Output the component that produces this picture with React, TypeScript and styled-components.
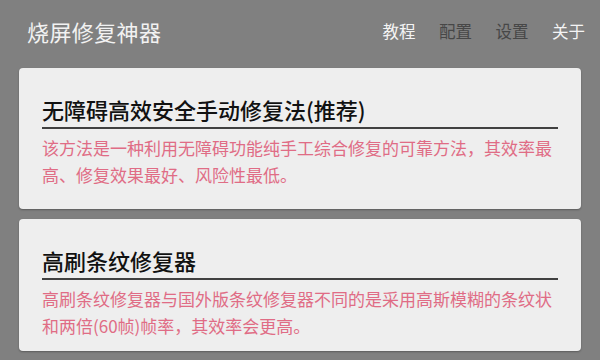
import React from 'react';
import styled, { createGlobalStyle } from 'styled-components';

const GlobalStyle = createGlobalStyle`
  html, body {
    margin: 0;
    padding: 0;
    background: #808080;
  }
  body {
    font-family: "Noto Sans CJK SC", "Noto Sans", sans-serif;
  }
`;

const navItems = [
  { label: '教程', active: true },
  { label: '配置', active: false },
  { label: '设置', active: false },
  { label: '关于', active: true },
];

const methods = [
  {
    title: '无障碍高效安全手动修复法(推荐)',
    desc: '该方法是一种利用无障碍功能纯手工综合修复的可靠方法，其效率最高、修复效果最好、风险性最低。',
    pb: 21,
  },
  {
    title: '高刷条纹修复器',
    desc: '高刷条纹修复器与国外版条纹修复器不同的是采用高斯模糊的条纹状和两倍(60帧)帧率，其效率会更高。',
    pb: 12,
  },
];

const App = () => {
  return (
    <Page>
      <GlobalStyle />
      <TopBar>
        <AppTitle>烧屏修复神器</AppTitle>
        <Nav>
          {navItems.map((item) => (
            <NavItem key={item.label} $active={item.active}>
              {item.label}
            </NavItem>
          ))}
        </Nav>
      </TopBar>

      <CardList>
        {methods.map((m) => (
          <Card key={m.title} $pb={m.pb}>
            <CardTitle>{m.title}</CardTitle>
            <CardDesc>{m.desc}</CardDesc>
          </Card>
        ))}
      </CardList>
    </Page>
  );
};

const Page = styled.div`
  width: 600px;
  height: 360px;
  overflow: hidden;
  background: #808080;
`;

const TopBar = styled.div`
  display: flex;
  justify-content: space-between;
  align-items: center;
  height: 62px;
  padding: 0 15px 0 27px;
  box-sizing: border-box;
`;

const AppTitle = styled.h1`
  margin: 0;
  color: #f2f2f2;
  font-size: 22px;
  font-weight: 400;
  letter-spacing: 0.4px;
`;

const Nav = styled.div`
  display: flex;
  gap: 23.5px;
`;

const NavItem = styled.span<{ $active: boolean }>`
  color: ${(p) => (p.$active ? '#f4f4f4' : '#474747')};
  font-size: 16.5px;
  line-height: 22px;
`;

const CardList = styled.div`
  display: flex;
  flex-direction: column;
  gap: 10px;
  padding: 6px 19px 0;
`;

const Card = styled.div<{ $pb: number }>`
  background: #eeeeee;
  border-radius: 4px;
  box-shadow: 0 1px 2px rgba(0, 0, 0, 0.3);
  padding: 26px 23px ${(p) => p.$pb}px;
`;

const CardTitle = styled.h2`
  margin: 0;
  padding-bottom: 3px;
  border-bottom: 2px solid #404040;
  color: #111;
  font-size: 22px;
  line-height: 30px;
  font-weight: 500;
`;

const CardDesc = styled.p`
  margin: 5px 0 0;
  color: #e06c85;
  font-size: 17px;
  line-height: 27px;
`;

export default App;
